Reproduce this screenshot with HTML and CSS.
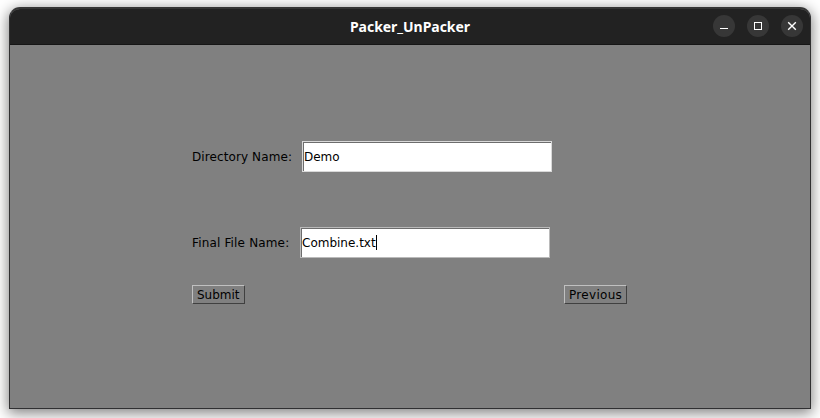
FILE: index.html
```
<!DOCTYPE html>
<html lang="en">
<head>
<meta charset="utf-8">
<title>Packer_UnPacker</title>
<link rel="stylesheet" href="styles.css">
</head>
<body>
<div class="window">
  <header class="titlebar">
    <h1 class="title">Packer_UnPacker</h1>
    <div class="controls">
      <span class="control"><svg viewBox="0 0 22 22"><path d="M7 13.5h8"/></svg></span>
      <span class="control"><svg viewBox="0 0 22 22"><rect x="7.5" y="7.5" width="7" height="7"/></svg></span>
      <span class="control"><svg viewBox="0 0 22 22"><path class="cross" d="M7.2 7.2l7.6 7.6M14.8 7.2l-7.6 7.6"/></svg></span>
    </div>
  </header>
  <main class="content">
    <div class="row row-first"><span class="label">Directory Name:</span><div class="field">Demo</div></div>
    <div class="row row-second"><span class="label label-short">Final File Name:</span><div class="field field-active">Combine.txt<span class="caret"></span></div></div>
    <div class="actions"><div class="button submit">Submit</div><div class="button previous">Previous</div></div>
  </main>
</div>
</body>
</html>
```
FILE: styles.css
```
* { box-sizing: border-box; }
body { margin: 0; width: 820px; height: 418px; overflow: hidden; background: #fff; padding: 7px 9px 9px; }
.window { height: 402px; border: 1px solid #303032; border-top: 2px solid #353535; border-radius: 11px 11px 0 0; overflow: hidden; background: #808080; box-shadow: 0 3px 14px 1px rgba(0,0,0,.5); }
.titlebar { height: 36px; background: #222; position: relative; display: flex; align-items: center; justify-content: center; border-bottom: 1px solid #161616; }
.title { margin: 0; font: bold 14px "Noto Sans", sans-serif; letter-spacing: -.04px; color: #fff; }
.controls { position: absolute; right: 7px; top: 6px; display: flex; gap: 12px; }
.control { width: 22px; height: 22px; border-radius: 50%; background: #373737; }
.control svg { display: block; width: 22px; height: 22px; fill: none; stroke: #fff; stroke-width: 1; }
.control .cross { stroke-width: 1.4; }
.content { padding: 96px 182px 0; font: 12px/16px "DejaVu Sans", sans-serif; color: #000; }
.row { display: flex; align-items: center; height: 31px; }
.row-second { margin-top: 55px; }
.label { width: 110px; letter-spacing: .1px; }
.label-short { width: 108px; letter-spacing: .16px; }
.field { display: flex; align-items: center; width: 250px; height: 31px; background: #fff; border: 1px solid #d9d9d9; box-shadow: inset 1px 1px #6d6d6d; padding-left: 1px; }
.field-active { border-color: #bababa; }
.caret { width: 1px; height: 15px; background: #000; }
.actions { display: flex; width: 435px; justify-content: space-between; margin-top: 27px; }
.button { height: 19px; border: 1px solid; border-color: #c0c0c0 #404040 #404040 #c0c0c0; padding: 1px 0 0 4px; white-space: nowrap; }
.submit { width: 53px; }
.previous { width: 63px; letter-spacing: .3px; }
```
